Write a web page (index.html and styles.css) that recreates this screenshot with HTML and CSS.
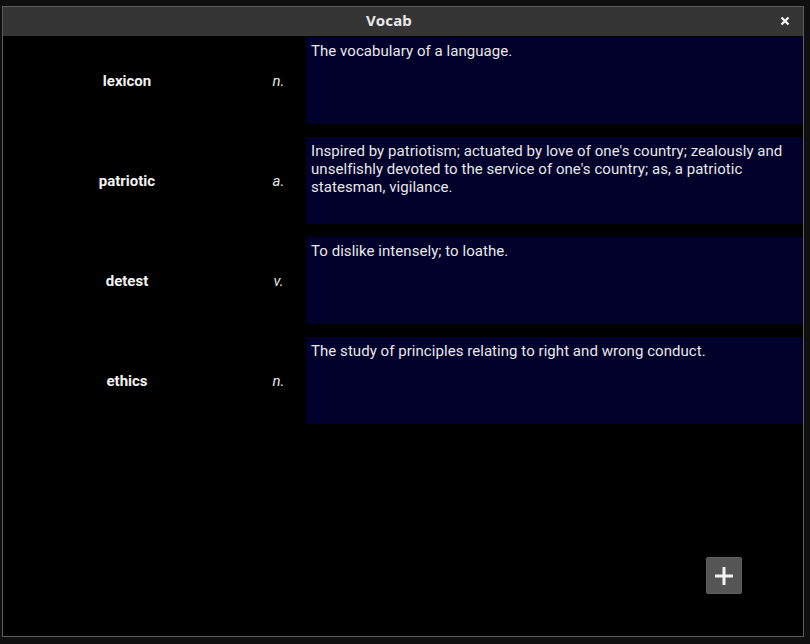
FILE: index.html
```html
<!DOCTYPE html>
<html>
<head>
<meta charset="utf-8">
<link rel="stylesheet" href="styles.css">
</head>
<body>
<div class="desktop">
  <div class="window">
    <div class="titlebar">
      <span class="title">Vocab</span>
      <span class="close"><svg width="10" height="10" viewBox="0 0 10 10"><path d="M1.5 1.5l7 7M8.5 1.5l-7 7" stroke="#f2f2f2" stroke-width="2.4"/></svg></span>
    </div>
    <div class="content">
      <div class="list">
        <div class="row">
          <div class="word">lexicon</div>
          <div class="pos">n.</div>
          <div class="def">The vocabulary of a language.</div>
        </div>
        <div class="row">
          <div class="word">patriotic</div>
          <div class="pos">a.</div>
          <div class="def">Inspired by patriotism; actuated by love of one's country; zealously and unselfishly devoted to the service of one's country; as, a patriotic statesman, vigilance.</div>
        </div>
        <div class="row">
          <div class="word">detest</div>
          <div class="pos">v.</div>
          <div class="def">To dislike intensely; to loathe.</div>
        </div>
        <div class="row">
          <div class="word">ethics</div>
          <div class="pos">n.</div>
          <div class="def">The study of principles relating to right and wrong conduct.</div>
        </div>
      </div>
      <div class="footer">
        <button class="add"><svg width="20" height="20" viewBox="0 0 20 20"><path d="M10 1v18M1 10h18" stroke="#f2f2f2" stroke-width="3"/></svg></button>
      </div>
    </div>
  </div>
</div>
</body>
</html>
```
FILE: styles.css
```css
html, body {
  margin: 0;
  padding: 0;
  background: #100f10;
  height: 100%;
  overflow: hidden;
}
.desktop {
  padding: 6px 0 0 2px;
}
.window {
  width: 800px;
  height: 629px;
  border: 1px solid #5c5c5c;
  background: #000;
  display: flex;
  flex-direction: column;
  font-family: Roboto, "Noto Sans", sans-serif;
}
.titlebar {
  height: 29px;
  flex: none;
  background: #353535;
  position: relative;
  display: flex;
  align-items: center;
  justify-content: center;
}
.title {
  font-family: "Noto Sans", sans-serif;
  font-weight: bold;
  font-size: 15px;
  color: #e8e8e8;
  margin: 0 0 3px -28px;
  letter-spacing: 0.2px;
}
.close {
  position: absolute;
  right: 13px;
  top: 9px;
  width: 10px;
  height: 10px;
  display: block;
}
.close svg {
  display: block;
}
.content {
  flex: 1;
  display: flex;
  flex-direction: column;
  padding-top: 1px;
}
.list {
  display: flex;
  flex-direction: column;
  gap: 13px;
}
.row {
  display: grid;
  grid-template-columns: 248px 55px 1fr;
  height: 87px;
}
.word {
  display: flex;
  align-items: center;
  justify-content: center;
  color: #f2f2f2;
  font-weight: bold;
  font-size: 15px;
  padding-top: 1px;
}
.pos {
  display: flex;
  align-items: center;
  justify-content: center;
  color: #e6e6e6;
  font-style: italic;
  font-size: 15px;
  padding-top: 1px;
}
.def {
  background: #01012b;
  color: #e8e8e8;
  font-size: 15px;
  line-height: 18px;
  padding: 5px 5px 3px;
  letter-spacing: 0.05px;
}
.footer {
  flex: 1;
  display: flex;
  align-items: flex-end;
  justify-content: flex-end;
  padding: 0 61px 42px 0;
}
.add {
  width: 36px;
  height: 37px;
  background: #555;
  border: 1px solid #606060;
  border-radius: 2px;
  display: flex;
  align-items: center;
  justify-content: center;
  padding: 0;
}
```
